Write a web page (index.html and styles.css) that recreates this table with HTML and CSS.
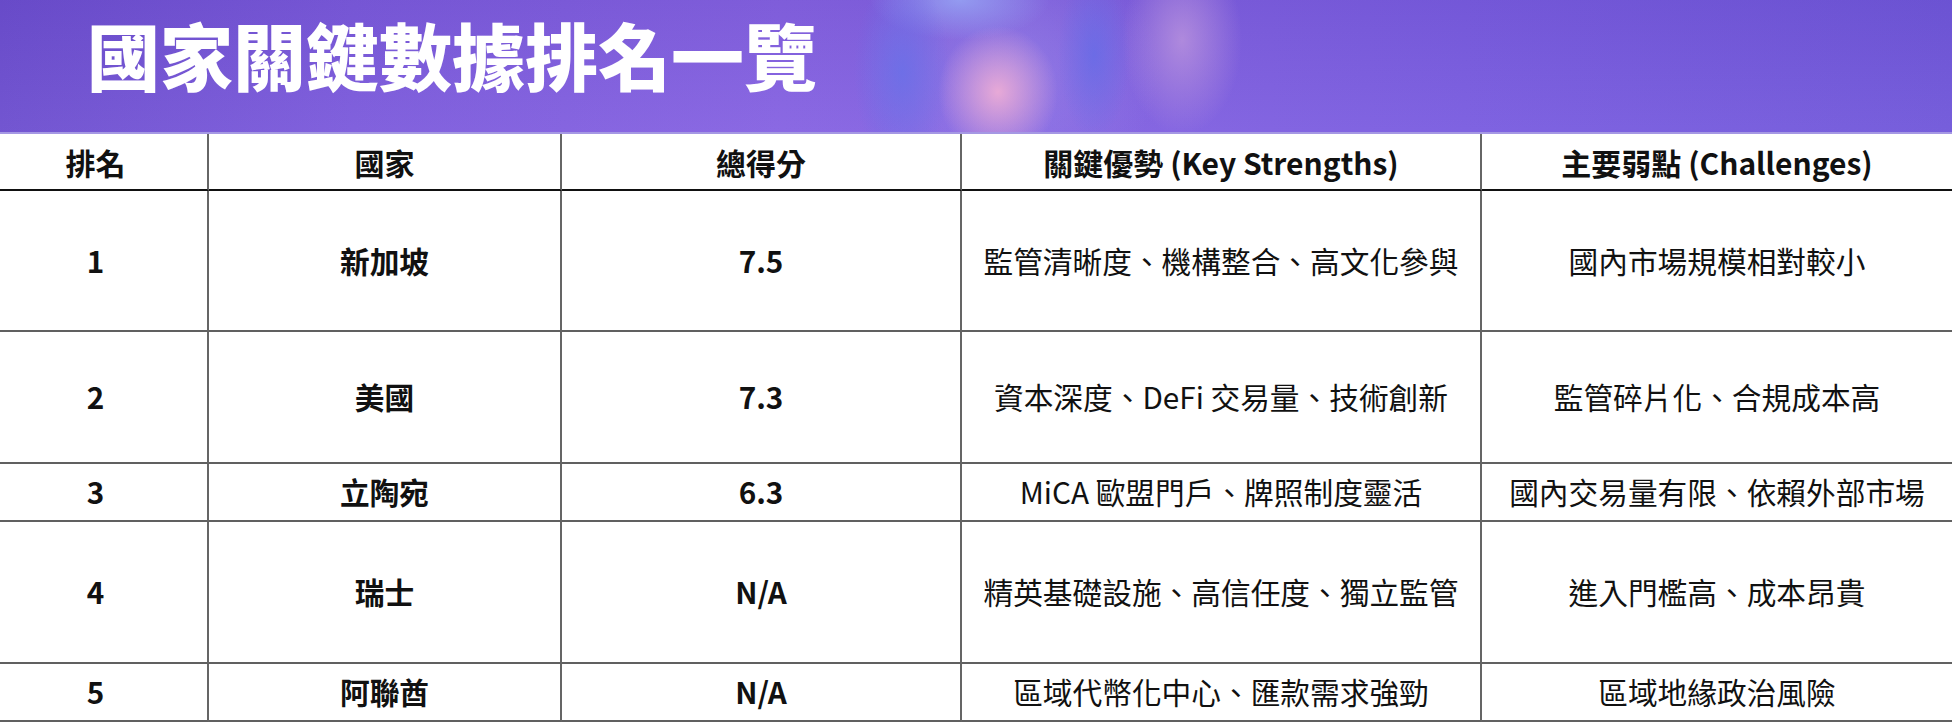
FILE: index.html
```html
<!DOCTYPE html>
<html lang="zh-Hant">
<head>
<meta charset="utf-8">
<title>國家關鍵數據排名一覽</title>
<link rel="stylesheet" href="styles.css">
</head>
<body>
<header class="banner">
  <h1 class="title">國家關鍵數據排名一覽</h1>
</header>
<section class="ranking">
  <div class="cell head rank">排名</div>
  <div class="cell head">國家</div>
  <div class="cell head">總得分</div>
  <div class="cell head">關鍵優勢 (Key Strengths)</div>
  <div class="cell head last">主要弱點 (Challenges)</div>

  <div class="cell strong rank">1</div>
  <div class="cell strong">新加坡</div>
  <div class="cell strong">7.5</div>
  <div class="cell">監管清晰度、機構整合、高文化參與</div>
  <div class="cell last">國內市場規模相對較小</div>

  <div class="cell strong rank">2</div>
  <div class="cell strong">美國</div>
  <div class="cell strong">7.3</div>
  <div class="cell">資本深度、DeFi 交易量、技術創新</div>
  <div class="cell last">監管碎片化、合規成本高</div>

  <div class="cell strong rank">3</div>
  <div class="cell strong">立陶宛</div>
  <div class="cell strong">6.3</div>
  <div class="cell">MiCA 歐盟門戶、牌照制度靈活</div>
  <div class="cell last">國內交易量有限、依賴外部市場</div>

  <div class="cell strong rank">4</div>
  <div class="cell strong">瑞士</div>
  <div class="cell strong">N/A</div>
  <div class="cell">精英基礎設施、高信任度、獨立監管</div>
  <div class="cell last">進入門檻高、成本昂貴</div>

  <div class="cell strong rank">5</div>
  <div class="cell strong">阿聯酋</div>
  <div class="cell strong">N/A</div>
  <div class="cell">區域代幣化中心、匯款需求強勁</div>
  <div class="cell last">區域地緣政治風險</div>
</section>
</body>
</html>
```
FILE: styles.css
```css
html, body {
  margin: 0;
  padding: 0;
  background: #ffffff;
}
body {
  width: 1952px;
  height: 722px;
  overflow: hidden;
  font-family: "Noto Sans CJK TC", "Noto Sans", sans-serif;
  color: #111111;
}
.banner {
  box-sizing: border-box;
  height: 134px;
  padding: 17px 0 0 87px;
  border-bottom: 2px solid #a598e4;
  background:
    radial-gradient(ellipse 60px 66px at 998px 92px, rgba(236, 172, 214, 0.95), rgba(236, 172, 214, 0) 100%),
    radial-gradient(ellipse 48px 100px at 902px 72px, rgba(104, 112, 232, 0.8), rgba(104, 112, 232, 0) 100%),
    radial-gradient(ellipse 36px 85px at 1094px 55px, rgba(98, 108, 232, 0.72), rgba(98, 108, 232, 0) 100%),
    radial-gradient(ellipse 60px 95px at 1182px 40px, rgba(196, 156, 222, 0.7), rgba(196, 156, 222, 0) 100%),
    radial-gradient(ellipse 90px 40px at 960px 0px, rgba(150, 164, 244, 0.85), rgba(150, 164, 244, 0) 100%),
    radial-gradient(ellipse 150px 130px at 1010px 70px, rgba(160, 145, 235, 0.5), rgba(160, 145, 235, 0) 100%),
    linear-gradient(180deg, rgba(40, 20, 120, 0.08) 0%, rgba(255, 255, 255, 0.04) 100%),
    linear-gradient(90deg, #6d4fcf 0%, #7c5bdc 18%, #8663e2 40%, #8060e0 60%, #7a5de0 75%, #7158da 100%);
}
.title {
  margin: 0;
  font-size: 73px;
  line-height: 72px;
  font-weight: 900;
  color: #ffffff;
  letter-spacing: 0;
  white-space: nowrap;
}
.ranking {
  display: grid;
  grid-template-columns: 209px 353px 400px 520px 1fr;
  grid-template-rows: 57px 141px 132px 58px 142px 58px;
}
.cell {
  box-sizing: border-box;
  display: flex;
  align-items: center;
  justify-content: center;
  text-align: center;
  border-right: 2px solid rgba(0, 0, 0, 0.6);
  border-bottom: 2px solid rgba(0, 0, 0, 0.62);
  font-size: 29.7px;
  font-weight: 400;
  line-height: 1.2;
  white-space: nowrap;
}
.cell.rank {
  padding-right: 16px;
}
.cell.last {
  border-right: none;
}
.cell.head {
  font-size: 30px;
  font-weight: 700;
  border-bottom-color: #111111;
}
.cell.strong {
  font-weight: 700;
}
```
